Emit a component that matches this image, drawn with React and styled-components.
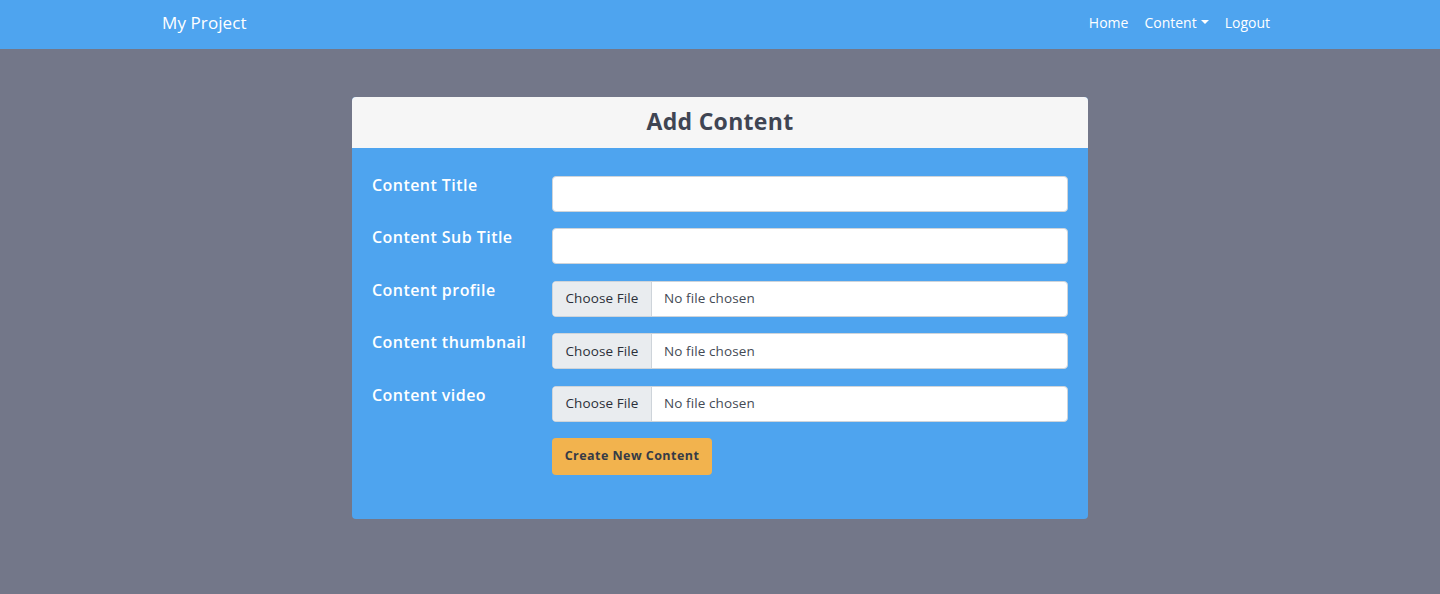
import React from "react";
import styled, { createGlobalStyle } from "styled-components";

const GlobalStyle = createGlobalStyle`
  * { box-sizing: border-box; }
  body {
    margin: 0;
    background: #737789;
    font-family: "Open Sans", "Liberation Sans", sans-serif;
    min-height: 594px;
  }
`

const NavBar = styled.nav`
  height: 49px;
  background: #4ea4ef;
  display: flex;
  justify-content: center;
`
const NavInner = styled.div`
  width: 1140px;
  padding: 0 12px 5px;
  display: flex;
  align-items: center;
  justify-content: space-between;
`
const Brand = styled.a`
  color: #fff;
  font-size: 17px;
  letter-spacing: 0.1px;
  text-decoration: none;
`
const NavLinks = styled.ul`
  list-style: none;
  margin: 0;
  padding: 0;
  display: flex;
`
const NavLink = styled.li`
  color: #fff;
  font-size: 14px;
  padding: 0 8px;
  display: flex;
  align-items: center;
  &::after {
    content: ${(p) => (p.caret ? "''" : "none")};
    margin-left: 4px;
    border-top: 4px solid #fff;
    border-left: 4px solid transparent;
    border-right: 4px solid transparent;
  }
`
const Main = styled.main`
  display: flex;
  justify-content: center;
  padding-top: 48px;
`
const Card = styled.div`
  width: 736px;
  border-radius: 4px;
  overflow: hidden;
  background: #4ea4ef;
`
const CardHeader = styled.div`
  height: 51px;
  padding-bottom: 3px;
  background: #f6f6f6;
  display: flex;
  align-items: center;
  justify-content: center;
  color: #3f4553;
  font-size: 23px;
  font-weight: 700;
  letter-spacing: 0.3px;
`
const CardBody = styled.form`
  padding: 28px 20px 44px;
`
const Row = styled.div`
  display: flex;
  align-items: flex-start;
  margin-bottom: ${(p) => (p.last ? "0" : "16.4px")};
`
const Label = styled.label`
  width: 180px;
  flex-shrink: 0;
  color: #fff;
  font-size: 16px;
  font-weight: 600;
  line-height: 24px;
  letter-spacing: 0.45px;
  margin-top: -3px;
`
const TextInput = styled.input`
  flex: 1;
  height: 36px;
  border: 1px solid #ced4da;
  border-radius: 4px;
  background: #fff;
  outline: none;
  font-family: inherit;
  font-size: 14px;
  padding: 0 12px;
`
const FileBox = styled.label`
  flex: 1;
  height: 36px;
  border: 1px solid #ced4da;
  border-radius: 4px;
  background: #fff;
  display: flex;
  align-items: stretch;
  overflow: hidden;
  font-size: 13.5px;
  color: #444a55;
  padding-bottom: 1px;
  input { display: none; }
`
const FileButton = styled.span`
  background: #e9ecef;
  border-right: 1px solid #ced4da;
  width: 99px;
  margin-bottom: -1px;
  padding-bottom: 1px;
  display: flex;
  align-items: center;
  justify-content: center;
  color: #2b2f38;
  letter-spacing: 0.1px;
`
const FileName = styled.span`
  display: flex;
  align-items: center;
  padding-left: 12px;
  letter-spacing: 0.1px;
`
const Spacer = styled.div`
  width: 180px;
  flex-shrink: 0;
`
const SubmitButton = styled.button`
  width: 160px;
  height: 37px;
  border: none;
  border-radius: 4px;
  background: #f2b34e;
  color: #363b46;
  font-family: inherit;
  font-size: 12.5px;
  font-weight: 700;
  letter-spacing: 0.45px;
  padding: 0 0 1px;
  cursor: pointer;
`

const fileFields = ["Content profile", "Content thumbnail", "Content video"]

export default function App() {
  return (
    <>
      <GlobalStyle />
      <NavBar>
        <NavInner>
          <Brand href="#">My Project</Brand>
          <NavLinks>
            <NavLink>Home</NavLink>
            <NavLink caret>Content</NavLink>
            <NavLink>Logout</NavLink>
          </NavLinks>
        </NavInner>
      </NavBar>
      <Main>
        <Card>
          <CardHeader>Add Content</CardHeader>
          <CardBody onSubmit={(e) => e.preventDefault()}>
            <Row>
              <Label>Content Title</Label>
              <TextInput type="text" />
            </Row>
            <Row>
              <Label>Content Sub Title</Label>
              <TextInput type="text" />
            </Row>
            {fileFields.map((f) => (
              <Row key={f}>
                <Label>{f}</Label>
                <FileBox>
                  <input type="file" />
                  <FileButton>Choose File</FileButton>
                  <FileName>No file chosen</FileName>
                </FileBox>
              </Row>
            ))}
            <Row last>
              <Spacer />
              <SubmitButton type="submit">Create New Content</SubmitButton>
            </Row>
          </CardBody>
        </Card>
      </Main>
    </>
  );
}
